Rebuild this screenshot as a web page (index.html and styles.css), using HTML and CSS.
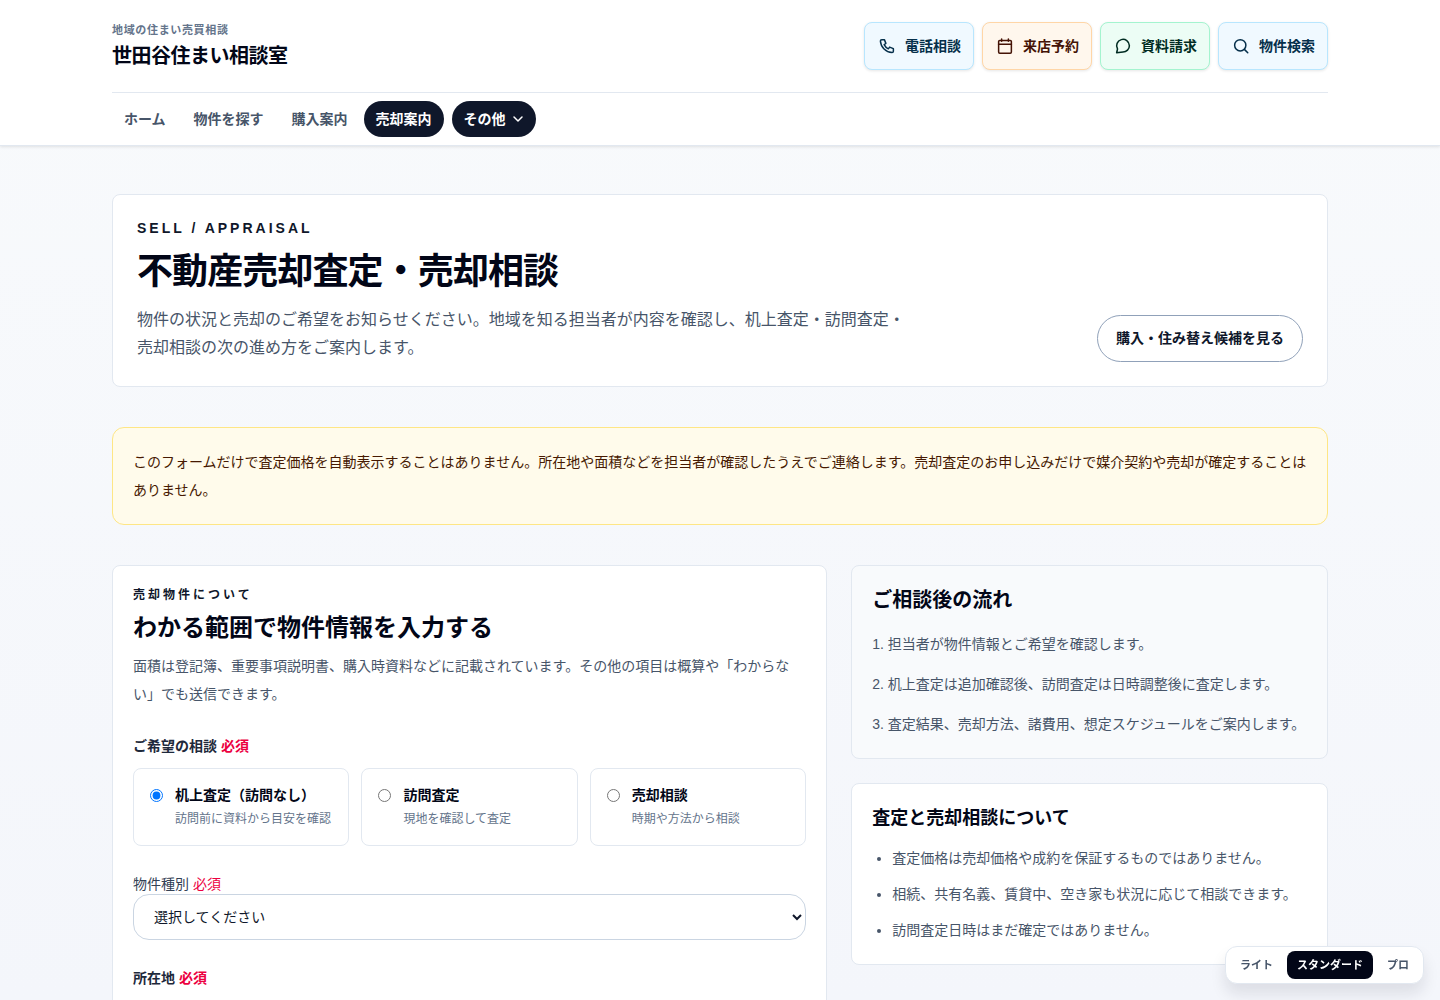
FILE: index.html
```html
<!DOCTYPE html>
<html lang="ja">
<head>
    <meta charset="UTF-8">
    <meta name="viewport" content="width=device-width, initial-scale=1.0">
    <title>不動産売却査定・売却相談 | 世田谷住まい相談室</title>
    <link rel="stylesheet" href="styles.css">
</head>
<body>

<header class="site-header">
    <div class="container">
        <div class="header-top">
            <a class="brand" href="#">
                <span class="brand-tagline">地域の住まい売買相談</span>
                <span class="brand-name">世田谷住まい相談室</span>
            </a>
            <div class="header-actions">
                <a class="action action-sky" href="#">
                    <svg class="icon" viewBox="0 0 24 24"><path d="M5 3.5h3.5l2 5-2.300 1.700a12 12 0 0 0 5.600 5.600l1.700-2.300 5 2V19a1.800 1.800 0 0 1-1.800 1.800C10.500 20.300 3.700 13.500 3.200 5.300A1.800 1.800 0 0 1 5 3.500z"/></svg>
                    <span>電話相談</span>
                </a>
                <a class="action action-orange" href="#">
                    <svg class="icon" viewBox="0 0 24 24"><rect x="3.5" y="4.5" width="17" height="17" rx="1.5"/><path d="M7.5 2.5v3M16.5 2.5v3M3.5 9.5h17"/></svg>
                    <span>来店予約</span>
                </a>
                <a class="action action-green" href="#">
                    <svg class="icon" viewBox="0 0 24 24"><path d="M20.5 11.5a8.500 8.500 0 0 1-8.500 8.500L3.500 21l1.200-5A8.500 8.500 0 1 1 20.500 11.500z"/></svg>
                    <span>資料請求</span>
                </a>
                <a class="action action-sky" href="#">
                    <svg class="icon" viewBox="0 0 24 24"><circle cx="11" cy="11" r="7.5"/><path d="m16.5 16.5 4.5 4.5"/></svg>
                    <span>物件検索</span>
                </a>
            </div>
        </div>
        <nav class="main-nav" aria-label="メインメニュー">
            <div class="nav-links">
                <a class="nav-item" href="#">ホーム</a>
                <a class="nav-item" href="#">物件を探す</a>
                <a class="nav-item" href="#">購入案内</a>
                <a class="nav-item active" href="#" aria-current="page">売却案内</a>
            </div>
            <button class="nav-item active" type="button">
                その他
                <svg class="chevron" viewBox="0 0 12 12"><path d="m2 4 4 4 4-4"/></svg>
            </button>
        </nav>
    </div>
</header>

<main class="container page">
    <section class="card hero">
        <div class="hero-text">
            <p class="eyebrow">SELL / APPRAISAL</p>
            <h1>不動産売却査定・売却相談</h1>
            <p class="lead">物件の状況と売却のご希望をお知らせください。地域を知る担当者が内容を確認し、机上査定・訪問査定・売却相談の次の進め方をご案内します。</p>
        </div>
        <a class="outline-button" href="#">購入・住み替え候補を見る</a>
    </section>

    <p class="notice">このフォームだけで査定価格を自動表示することはありません。所在地や面積などを担当者が確認したうえでご連絡します。売却査定のお申し込みだけで媒介契約や売却が確定することはありません。</p>

    <div class="columns">
        <form class="card form-card">
            <p class="form-eyebrow">売却物件について</p>
            <h2 class="form-title">わかる範囲で物件情報を入力する</h2>
            <p class="form-lead">面積は登記簿、重要事項説明書、購入時資料などに記載されています。その他の項目は概算や「わからない」でも送信できます。</p>

            <fieldset class="field">
                <legend class="label-strong">ご希望の相談 <span class="required">必須</span></legend>
                <div class="options">
                    <label class="option">
                        <input type="radio" name="consultation" value="desk" checked>
                        <span class="option-text">
                            <span class="option-title">机上査定（訪問なし）</span>
                            <span class="option-note">訪問前に資料から目安を確認</span>
                        </span>
                    </label>
                    <label class="option">
                        <input type="radio" name="consultation" value="visit">
                        <span class="option-text">
                            <span class="option-title">訪問査定</span>
                            <span class="option-note">現地を確認して査定</span>
                        </span>
                    </label>
                    <label class="option">
                        <input type="radio" name="consultation" value="talk">
                        <span class="option-text">
                            <span class="option-title">売却相談</span>
                            <span class="option-note">時期や方法から相談</span>
                        </span>
                    </label>
                </div>
            </fieldset>

            <div class="field">
                <label class="label" for="property-type">物件種別 <span class="required">必須</span></label>
                <select class="control" id="property-type">
                    <option>選択してください</option>
                    <option>マンション</option>
                    <option>一戸建て</option>
                    <option>土地</option>
                </select>
            </div>

            <fieldset class="field">
                <legend class="label-strong">所在地 <span class="required">必須</span></legend>
                <div class="address">
                    <input class="control" type="text" aria-label="所在地">
                </div>
            </fieldset>
        </form>

        <aside class="side">
            <section class="card side-card flow">
                <h2>ご相談後の流れ</h2>
                <ol>
                    <li>1. 担当者が物件情報とご希望を確認します。</li>
                    <li>2. 机上査定は追加確認後、訪問査定は日時調整後に査定します。</li>
                    <li>3. 査定結果、売却方法、諸費用、想定スケジュールをご案内します。</li>
                </ol>
            </section>
            <section class="card side-card about">
                <h2>査定と売却相談について</h2>
                <ul>
                    <li>査定価格は売却価格や成約を保証するものではありません。</li>
                    <li>相続、共有名義、賃貸中、空き家も状況に応じて相談できます。</li>
                    <li>訪問査定日時はまだ確定ではありません。</li>
                </ul>
            </section>
        </aside>
    </div>
</main>

<div class="mode-switch">
    <button type="button">ライト</button>
    <button type="button" class="selected">スタンダード</button>
    <button type="button">プロ</button>
</div>

</body>
</html>
```
FILE: styles.css
```css
* {
    box-sizing: border-box;
}
body {
    margin: 0;
    font-family: "Liberation Sans", "Noto Sans CJK JP", sans-serif;
    font-size: 14px;
    line-height: 20px;
    color: #0f172a;
    background: #f4f6fb linear-gradient(#f8fafc, #f4f6fb 1000px) no-repeat;
}
h1, h2, p, ol, ul, fieldset, legend {
    margin: 0;
    padding: 0;
}
a {
    color: inherit;
    text-decoration: none;
}
button, input, select {
    font: inherit;
    color: inherit;
}
button {
    border: none;
    background: none;
    cursor: pointer;
}
.container {
    max-width: 1216px;
    margin: 0 auto;
}
.card {
    background: #fff;
    border: 1px solid #e2e8f0;
    border-radius: 8px;
}

/* header */
.site-header {
    background: #fff;
    border-bottom: 1px solid #e2e8f0;
    box-shadow: 0 1px 3px rgba(0, 0, 0, 0.1);
}
.header-top {
    display: flex;
    justify-content: space-between;
    align-items: center;
    padding: 22px 0;
    border-bottom: 1px solid #e2e8f0;
}
.brand {
    display: flex;
    flex-direction: column;
    gap: 4px;
}
.brand-tagline {
    font-size: 11px;
    line-height: 16px;
    letter-spacing: 0.06em;
    font-weight: 600;
    color: #64748b;
}
.brand-name {
    font-size: 20px;
    line-height: 28px;
    letter-spacing: -0.025em;
    font-weight: 600;
    color: #020617;
}
.header-actions {
    display: flex;
    gap: 8px;
}
.action {
    display: flex;
    align-items: center;
    gap: 8px;
    height: 48px;
    padding: 0 12px;
    border: 1px solid;
    border-radius: 8px;
    font-weight: 700;
    box-shadow: 0 1px 3px rgba(0, 0, 0, 0.1);
}
.action-sky {
    background: #f0f9ff;
    border-color: #b8e6fe;
    color: #052f4a;
}
.action-orange {
    background: #fff7ed;
    border-color: #ffd6a7;
    color: #441306;
}
.action-green {
    background: #ecfdf5;
    border-color: #a4f4cf;
    color: #002c22;
}
.icon {
    width: 18px;
    height: 18px;
    margin: 0 1px;
    fill: none;
    stroke: currentColor;
    stroke-width: 2;
    stroke-linecap: round;
    stroke-linejoin: round;
}
.main-nav {
    display: flex;
    gap: 8px;
    padding: 8px 0;
}
.nav-links {
    display: flex;
    gap: 4px;
}
.nav-item {
    display: flex;
    align-items: center;
    gap: 6px;
    padding: 8px 12px;
    border-radius: 18px;
    font-weight: 600;
    color: #475569;
}
.nav-item.active {
    background: #0f172a;
    color: #fff;
    font-weight: 700;
}
.chevron {
    width: 12px;
    height: 12px;
    fill: none;
    stroke: currentColor;
    stroke-width: 1.5;
    stroke-linecap: round;
    stroke-linejoin: round;
}

/* page */
.page {
    display: flex;
    flex-direction: column;
    gap: 40px;
    padding: 48px 0;
}
.hero {
    display: flex;
    justify-content: space-between;
    align-items: flex-end;
    padding: 24px;
}
.hero-text {
    max-width: 768px;
}
.eyebrow {
    font-size: 14px;
    line-height: 19px;
    letter-spacing: 3px;
    font-weight: 600;
}
h1 {
    margin-top: 12px;
    font-size: 36px;
    line-height: 44px;
    letter-spacing: -0.025em;
    font-weight: 600;
    color: #020617;
}
.lead {
    margin-top: 12px;
    font-size: 16px;
    line-height: 28px;
    color: #475569;
}
.outline-button {
    padding: 12px 18px;
    border: 1px solid #90a1b9;
    border-radius: 24px;
    line-height: 21px;
    font-weight: 600;
}
.notice {
    padding: 20px 16px 20px 20px;
    background: #fffbeb;
    border: 1px solid #fee685;
    border-radius: 12px;
    line-height: 28px;
    color: #461901;
}
.columns {
    display: grid;
    grid-template-columns: 3fr 2fr;
    align-items: start;
    gap: 24px;
}

/* form */
.form-card {
    padding: 20px;
}
.form-eyebrow {
    font-size: 12px;
    line-height: 18px;
    letter-spacing: 3px;
    font-weight: 700;
}
.form-title {
    margin-top: 8px;
    font-size: 24px;
    line-height: 32px;
    font-weight: 700;
    color: #020617;
}
.form-lead {
    margin-top: 8px;
    line-height: 28px;
    color: #475569;
}
.field {
    margin-top: 28px;
    border: none;
}
.label {
    display: block;
    color: #334155;
}
.label-strong {
    font-weight: 700;
    color: #1e293b;
}
.required {
    color: #ec003f;
}
.options {
    display: grid;
    grid-template-columns: repeat(3, 1fr);
    gap: 12px;
    margin-top: 12px;
}
.option {
    display: flex;
    align-items: flex-start;
    gap: 12px;
    padding: 16px;
    border: 1px solid #e2e8f0;
    border-radius: 8px;
}
.option input {
    flex: none;
    width: 13px;
    height: 13px;
    margin: 4px 0 0;
}
.option-text {
    display: flex;
    flex-direction: column;
    gap: 4px;
}
.option-title {
    font-weight: 700;
    color: #020617;
}
.option-note {
    font-size: 12px;
    color: #64748b;
    white-space: nowrap;
}
.control {
    display: block;
    width: 100%;
    height: 46px;
    padding: 12px 16px;
    background: #fff;
    border: 1px solid #cad5e2;
    border-radius: 16px;
}
.address {
    margin-top: 16px;
}

/* side column */
.side {
    display: flex;
    flex-direction: column;
    gap: 24px;
}
.side-card {
    padding: 20px;
}
.side-card h2 {
    line-height: 28px;
    font-weight: 700;
    color: #020617;
}
.side-card li {
    line-height: 28px;
    color: #475569;
}
.flow {
    background: #f8fafc;
}
.flow h2 {
    font-size: 20px;
}
.flow ol {
    display: flex;
    flex-direction: column;
    gap: 12px;
    margin-top: 16px;
    list-style: none;
}
.about h2 {
    font-size: 18px;
}
.about ul {
    display: flex;
    flex-direction: column;
    gap: 8px;
    margin-top: 12px;
    padding-left: 20px;
}

/* display mode switch, floats over the page */
.mode-switch {
    position: fixed;
    right: 16px;
    bottom: 16px;
    display: flex;
    gap: 4px;
    padding: 4px;
    background: #fff;
    border: 1px solid #e2e8f0;
    border-radius: 12px;
    box-shadow: 0 10px 15px rgba(15, 23, 42, 0.1);
}
.mode-switch button {
    height: 28px;
    padding: 0 10px;
    border-radius: 8px;
    font-size: 11px;
    font-weight: 700;
    color: #475569;
}
.mode-switch .selected {
    background: #020617;
    color: #fff;
}
```
